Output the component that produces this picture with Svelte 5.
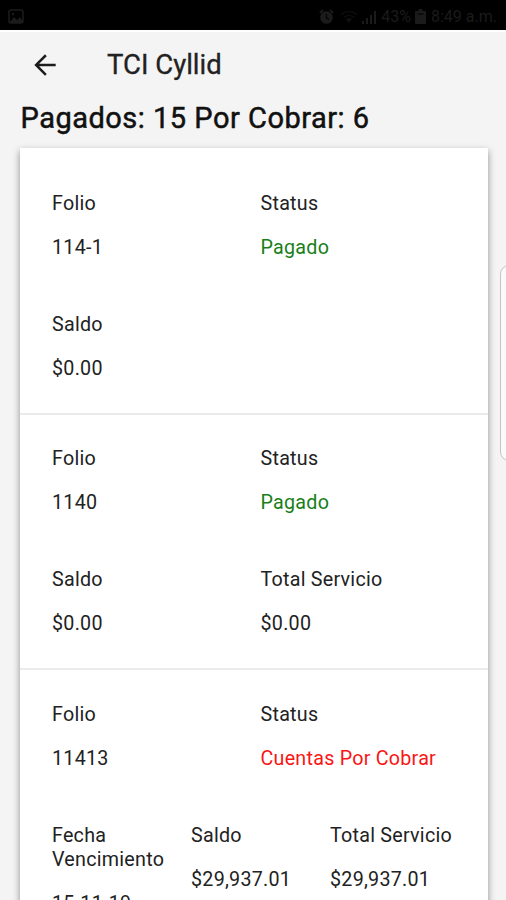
<script lang="ts">
  interface Field {
    label: string;
    value: string;
    tone?: 'paid' | 'due';
  }

  interface Account {
    id: string;
    rows: Field[][];
  }

  const accounts: Account[] = [
    {
      id: '114-1',
      rows: [
        [
          { label: 'Folio', value: '114-1' },
          { label: 'Status', value: 'Pagado', tone: 'paid' },
        ],
        [{ label: 'Saldo', value: '$0.00' }],
      ],
    },
    {
      id: '1140',
      rows: [
        [
          { label: 'Folio', value: '1140' },
          { label: 'Status', value: 'Pagado', tone: 'paid' },
        ],
        [
          { label: 'Saldo', value: '$0.00' },
          { label: 'Total Servicio', value: '$0.00' },
        ],
      ],
    },
    {
      id: '11413',
      rows: [
        [
          { label: 'Folio', value: '11413' },
          { label: 'Status', value: 'Cuentas Por Cobrar', tone: 'due' },
        ],
        [
          { label: 'Fecha Vencimiento', value: '15-11-19' },
          { label: 'Saldo', value: '$29,937.01' },
          { label: 'Total Servicio', value: '$29,937.01' },
        ],
      ],
    },
  ];
</script>

<div class="screen">
  <div class="status-bar">
    <svg class="status-bar__image" width="16" height="16" viewBox="0 0 16 16">
      <rect x="1" y="1" width="14" height="13" rx="2" fill="none" stroke="currentColor" stroke-width="1.6" />
      <path d="M2 13l4-5 3 3 3-3 3 4v2H2z" fill="currentColor" />
      <circle cx="5" cy="5" r="1.2" fill="currentColor" />
    </svg>
    <div class="status-bar__right">
      <svg width="15" height="16" viewBox="0 0 15 16">
        <path d="M1 4l3-3M14 4l-3-3" stroke="currentColor" stroke-width="2" />
        <circle cx="7.5" cy="8.5" r="6.3" fill="currentColor" />
        <path d="M7.5 5v4l2.5 1.5" fill="none" stroke="#000" stroke-width="1.2" />
      </svg>
      <svg class="status-bar__wifi" width="18" height="14" viewBox="0 0 18 14">
        <path d="M1 4.5q8-6 16 0M4 7.5q5-4 10 0" fill="none" stroke="currentColor" stroke-width="1.2" />
        <path d="M6 9q3-2 6 0l-3 4z" fill="currentColor" />
      </svg>
      <svg width="16" height="14" viewBox="0 0 16 14">
        <path d="M1 11h2v3H1zM5 8h2v6H5zM9 5h2v9H9zM13 1h2v13h-2z" fill="currentColor" />
      </svg>
      <span class="status-bar__percent">43%</span>
      <svg class="status-bar__battery" width="11" height="15" viewBox="0 0 11 15">
        <path d="M3.500 0h4v2H10q1 0 1 1v11q0 1-1 1H1q-1 0-1-1V3q0-1 1-1h2.500z" fill="currentColor" />
        <path d="M2.500 5h6" stroke="#000" />
      </svg>
      <span class="status-bar__time">8:49 a.m.</span>
    </div>
  </div>

  <header class="toolbar">
    <button class="toolbar__back" aria-label="Regresar">
      <svg width="32" height="32" viewBox="0 0 24 24">
        <path d="M20 11.100H7.600l5.700-5.700L12 4l-8 8 8 8 1.300-1.300L7.600 12.900H20z" fill="currentColor" />
      </svg>
    </button>
    <h1 class="toolbar__title">TCI Cyllid</h1>
  </header>

  <h2 class="summary">Pagados: 15 Por Cobrar: 6</h2>

  <main class="card">
    {#each accounts as account (account.id)}
      <section class="account">
        {#each account.rows as row}
          <div class="row" class:row_thirds={row.length === 3}>
            {#each row as field}
              <div class="field">
                <p>{field.label}</p>
                <p class={field.tone}>{field.value}</p>
              </div>
            {/each}
          </div>
        {/each}
      </section>
    {/each}
  </main>

  <div class="edge-handle"></div>
</div>

<style>
  :global(body) {
    background: #f4f4f4;
  }

  .screen {
    position: relative;
    height: 900px;
    overflow: hidden;
    background: #f4f4f4;
    color: #222;
    font-family: Roboto, "Liberation Sans", sans-serif;
  }

  .status-bar {
    display: flex;
    box-sizing: border-box;
    height: 32px;
    padding: 3px 9px 0 8px;
    align-items: center;
    justify-content: space-between;
    border-bottom: 2px solid #fff;
    background: #000;
    background-clip: padding-box;
    color: #1b1b1b;
    font-size: 16px;
  }

  .status-bar__right {
    display: flex;
    align-items: center;
  }

  .status-bar__wifi {
    margin: 0 3px 0 6px;
    opacity: 0.6;
  }

  .status-bar__percent {
    margin-left: 4px;
  }

  .status-bar__battery {
    margin: 0 5px 0 4px;
  }

  .toolbar {
    display: flex;
    height: 66px;
    align-items: center;
  }

  .toolbar__back {
    display: flex;
    padding: 0;
    border: 0;
    margin: 0 46px 0 29px;
    background: none;
    color: #1c1c1c;
  }

  .toolbar__title {
    margin: 0;
    font-size: 27.5px;
    font-weight: 400;
    line-height: 34px;
    -webkit-text-stroke: 0.3px currentColor;
  }

  .summary {
    margin: 2px 0 12px 20.5px;
    font-size: 29px;
    font-weight: 400;
    line-height: 36px;
    letter-spacing: 0.5px;
    color: #111;
    -webkit-text-stroke: 0.5px currentColor;
  }

  .card {
    box-sizing: border-box;
    width: 468px;
    min-height: 900px;
    padding-top: 11.1px;
    margin-left: 20px;
    background: #fff;
    box-shadow: 0 3px 7px rgba(0, 0, 0, 0.42);
  }

  .account {
    padding: 12.6px 19px 0 32px;
    border-bottom: 2px solid #ebebeb;
  }

  .row {
    display: grid;
    grid-template-columns: 1fr 1fr;
    padding-bottom: 13px;
  }

  .row:last-child {
    padding-bottom: 12px;
  }

  .row_thirds {
    grid-template-columns: repeat(3, 1fr);
  }

  .field p {
    margin: 20px 0;
    font-size: 19.7px;
    line-height: 24px;
    letter-spacing: 0.25px;
  }

  .field .paid {
    color: #188018;
  }

  .field .due {
    color: #fa1515;
  }

  /* system edge panel tab, cut off by the screen border */
  .edge-handle {
    position: absolute;
    top: 265px;
    right: -14px;
    box-sizing: border-box;
    width: 20px;
    height: 196px;
    border: 1px solid #c4c4c4;
    border-radius: 9px;
    background: #fafafa;
  }
</style>
